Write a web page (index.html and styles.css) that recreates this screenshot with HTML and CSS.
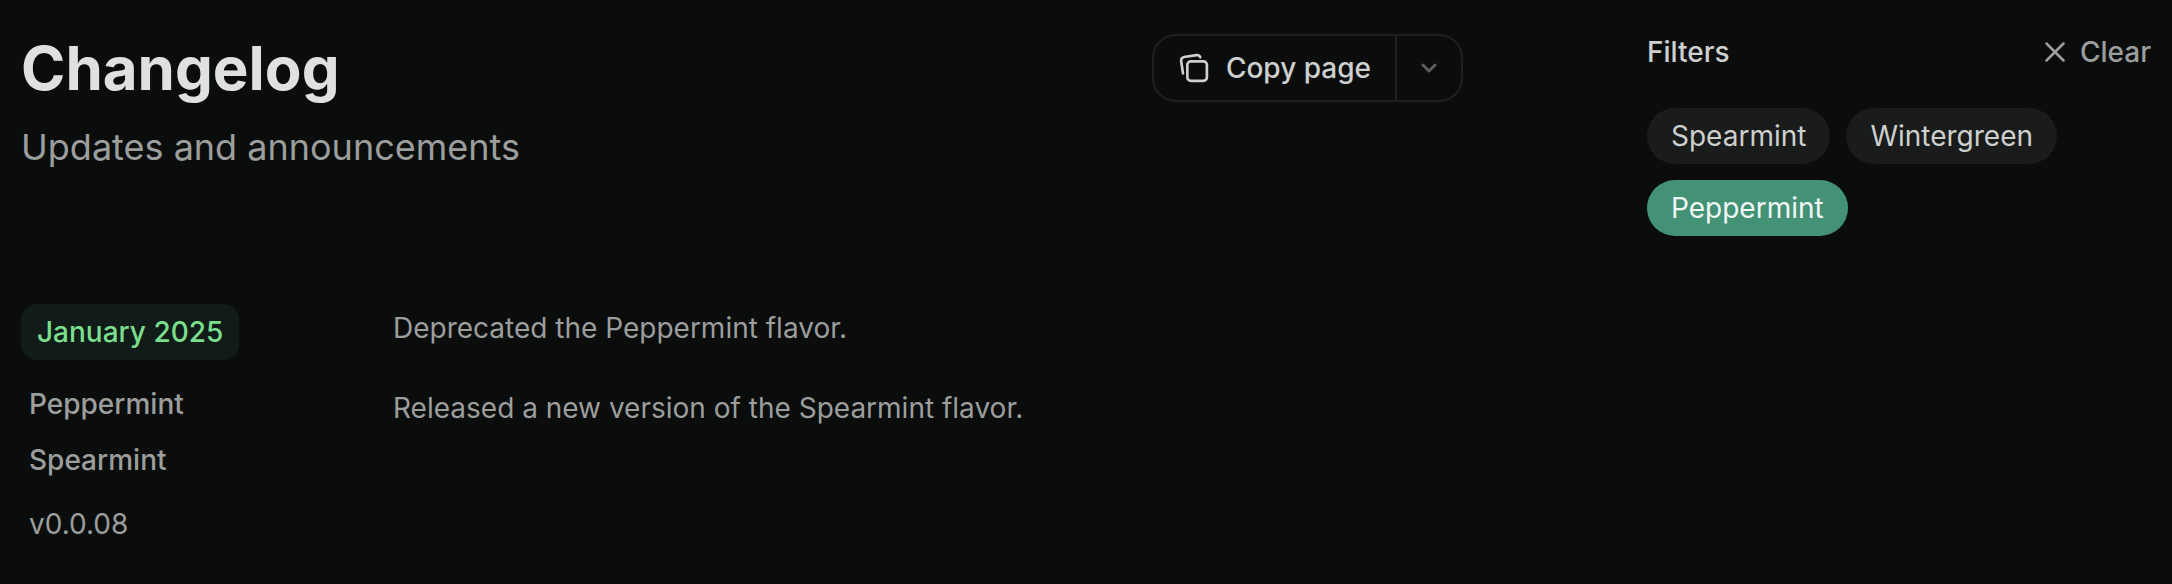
FILE: index.html
```html
<!DOCTYPE html>
<html lang="en">
<head>
<meta charset="utf-8">
<meta name="viewport" content="width=device-width, initial-scale=1">
<title>Changelog</title>
<link rel="stylesheet" href="styles.css">
</head>
<body>
<div class="page">
  <main class="content">
    <header class="header">
      <div class="header-text">
        <h1 class="title">Changelog</h1>
        <p class="subtitle">Updates and announcements</p>
      </div>
      <div class="copy-group">
        <button type="button" class="copy-button">
          <svg class="copy-icon" viewBox="0 0 18 18" fill="none" stroke="currentColor" stroke-width="1.5" stroke-linecap="round" stroke-linejoin="round" aria-hidden="true">
            <path d="M14.25 5.25H7.25C6.145 5.25 5.25 6.145 5.25 7.25V14.25C5.25 15.355 6.145 16.25 7.25 16.25H14.25C15.355 16.25 16.25 15.355 16.25 14.25V7.25C16.25 6.145 15.355 5.25 14.25 5.25Z"/>
            <path d="M2.801 11.998L1.772 5.074C1.61 3.981 2.364 2.964 3.456 2.802L10.38 1.773C11.313 1.634 12.19 2.163 12.528 3.001"/>
          </svg>
          <span>Copy page</span>
        </button>
        <button type="button" class="menu-button" aria-label="More actions">
          <svg class="chevron-icon" viewBox="0 0 16 10" fill="none" stroke="currentColor" stroke-width="3" stroke-linecap="round" stroke-linejoin="round" aria-hidden="true">
            <path d="M2 2l6 6 6-6"/>
          </svg>
        </button>
      </div>
    </header>
    <article class="update">
      <div class="update-meta">
        <a class="update-date" href="#january-2025" id="january-2025">January 2025</a>
        <ul class="update-tags">
          <li>Peppermint</li>
          <li>Spearmint</li>
        </ul>
        <p class="update-version">v0.0.08</p>
      </div>
      <div class="update-body">
        <p>Deprecated the Peppermint flavor.</p>
        <p>Released a new version of the Spearmint flavor.</p>
      </div>
    </article>
  </main>
  <aside class="filters">
    <div class="filters-head">
      <h2 class="filters-title">Filters</h2>
      <button type="button" class="clear-button">
        <svg class="clear-icon" viewBox="0 0 22 22" fill="none" stroke="currentColor" stroke-width="2.5" stroke-linecap="round" aria-hidden="true">
          <path d="M2.5 2.5l17 17M19.5 2.5l-17 17"/>
        </svg>
        <span>Clear</span>
      </button>
    </div>
    <div class="chips">
      <button type="button" class="chip" aria-pressed="false">Spearmint</button>
      <button type="button" class="chip" aria-pressed="false">Wintergreen</button>
      <button type="button" class="chip chip-active" aria-pressed="true">Peppermint</button>
    </div>
  </aside>
</div>
</body>
</html>
```
FILE: styles.css
```css
* {
  box-sizing: border-box;
}

body {
  margin: 0;
  background: #0a0d0c;
  color: #9c9e9d;
  font-family: Inter, "Liberation Sans", sans-serif;
  font-size: 28px;
  line-height: 40px;
}

h1, h2, p, ul {
  margin: 0;
  padding: 0;
}

button {
  margin: 0;
  padding: 0;
  border: 0;
  background: none;
  color: inherit;
  font: inherit;
  cursor: pointer;
}

svg {
  display: block;
  flex: none;
}

.page {
  display: flex;
  gap: 184px;
  padding: 32px 21px 40px;
}

.content {
  flex: 1;
  min-width: 0;
}

.header {
  display: flex;
  justify-content: space-between;
  align-items: flex-start;
  padding-top: 2px;
}

.title {
  color: #dfe1e0;
  font-size: 60px;
  font-weight: 700;
  line-height: 68px;
}

.subtitle {
  margin-top: 16px;
  font-size: 36px;
  line-height: 58px;
}

.copy-group {
  display: flex;
  border: 2px solid #1e201f;
  border-radius: 24px;
}

.copy-button {
  display: flex;
  align-items: center;
  gap: 16px;
  padding: 12px 24px;
  color: #ced0cf;
  font-weight: 500;
}

.menu-button {
  padding: 0 24px;
  border-left: 2px solid #1e201f;
  color: #5c5e5d;
}

.copy-icon {
  width: 32px;
  height: 32px;
}

.chevron-icon {
  width: 16px;
  height: 10px;
}

.update {
  display: grid;
  grid-template-columns: 320px 1fr;
  column-gap: 52px;
  margin-top: 128px;
}

.update-meta {
  display: flex;
  flex-direction: column;
  align-items: flex-start;
  gap: 24px;
}

.update-date {
  padding: 8px 16px;
  border-radius: 16px;
  background: #111b18;
  color: #7ade8c;
  font-weight: 500;
  text-decoration: none;
}

.update-tags {
  display: flex;
  flex-direction: column;
  gap: 16px;
  padding: 0 8px;
  font-weight: 500;
  list-style: none;
}

.update-version {
  padding: 0 8px;
}

.update-body {
  display: flex;
  flex-direction: column;
  gap: 32px;
  line-height: 48px;
}

.filters {
  flex: none;
  width: 504px;
}

.filters-head {
  display: flex;
  justify-content: space-between;
  align-items: center;
}

.filters-title {
  color: #ced0cf;
  font-size: 28px;
  font-weight: 500;
  line-height: 40px;
}

.clear-button {
  display: flex;
  align-items: center;
  gap: 14px;
  font-weight: 500;
}

.clear-icon {
  width: 22px;
  height: 22px;
}

.chips {
  display: flex;
  flex-wrap: wrap;
  gap: 16px;
  margin-top: 36px;
}

.chip {
  padding: 8px 24px;
  border-radius: 28px;
  background: #1a1c1b;
  color: #ced0cf;
}

.chip-active {
  background: #449276;
  color: #f0f7f4;
}
```
